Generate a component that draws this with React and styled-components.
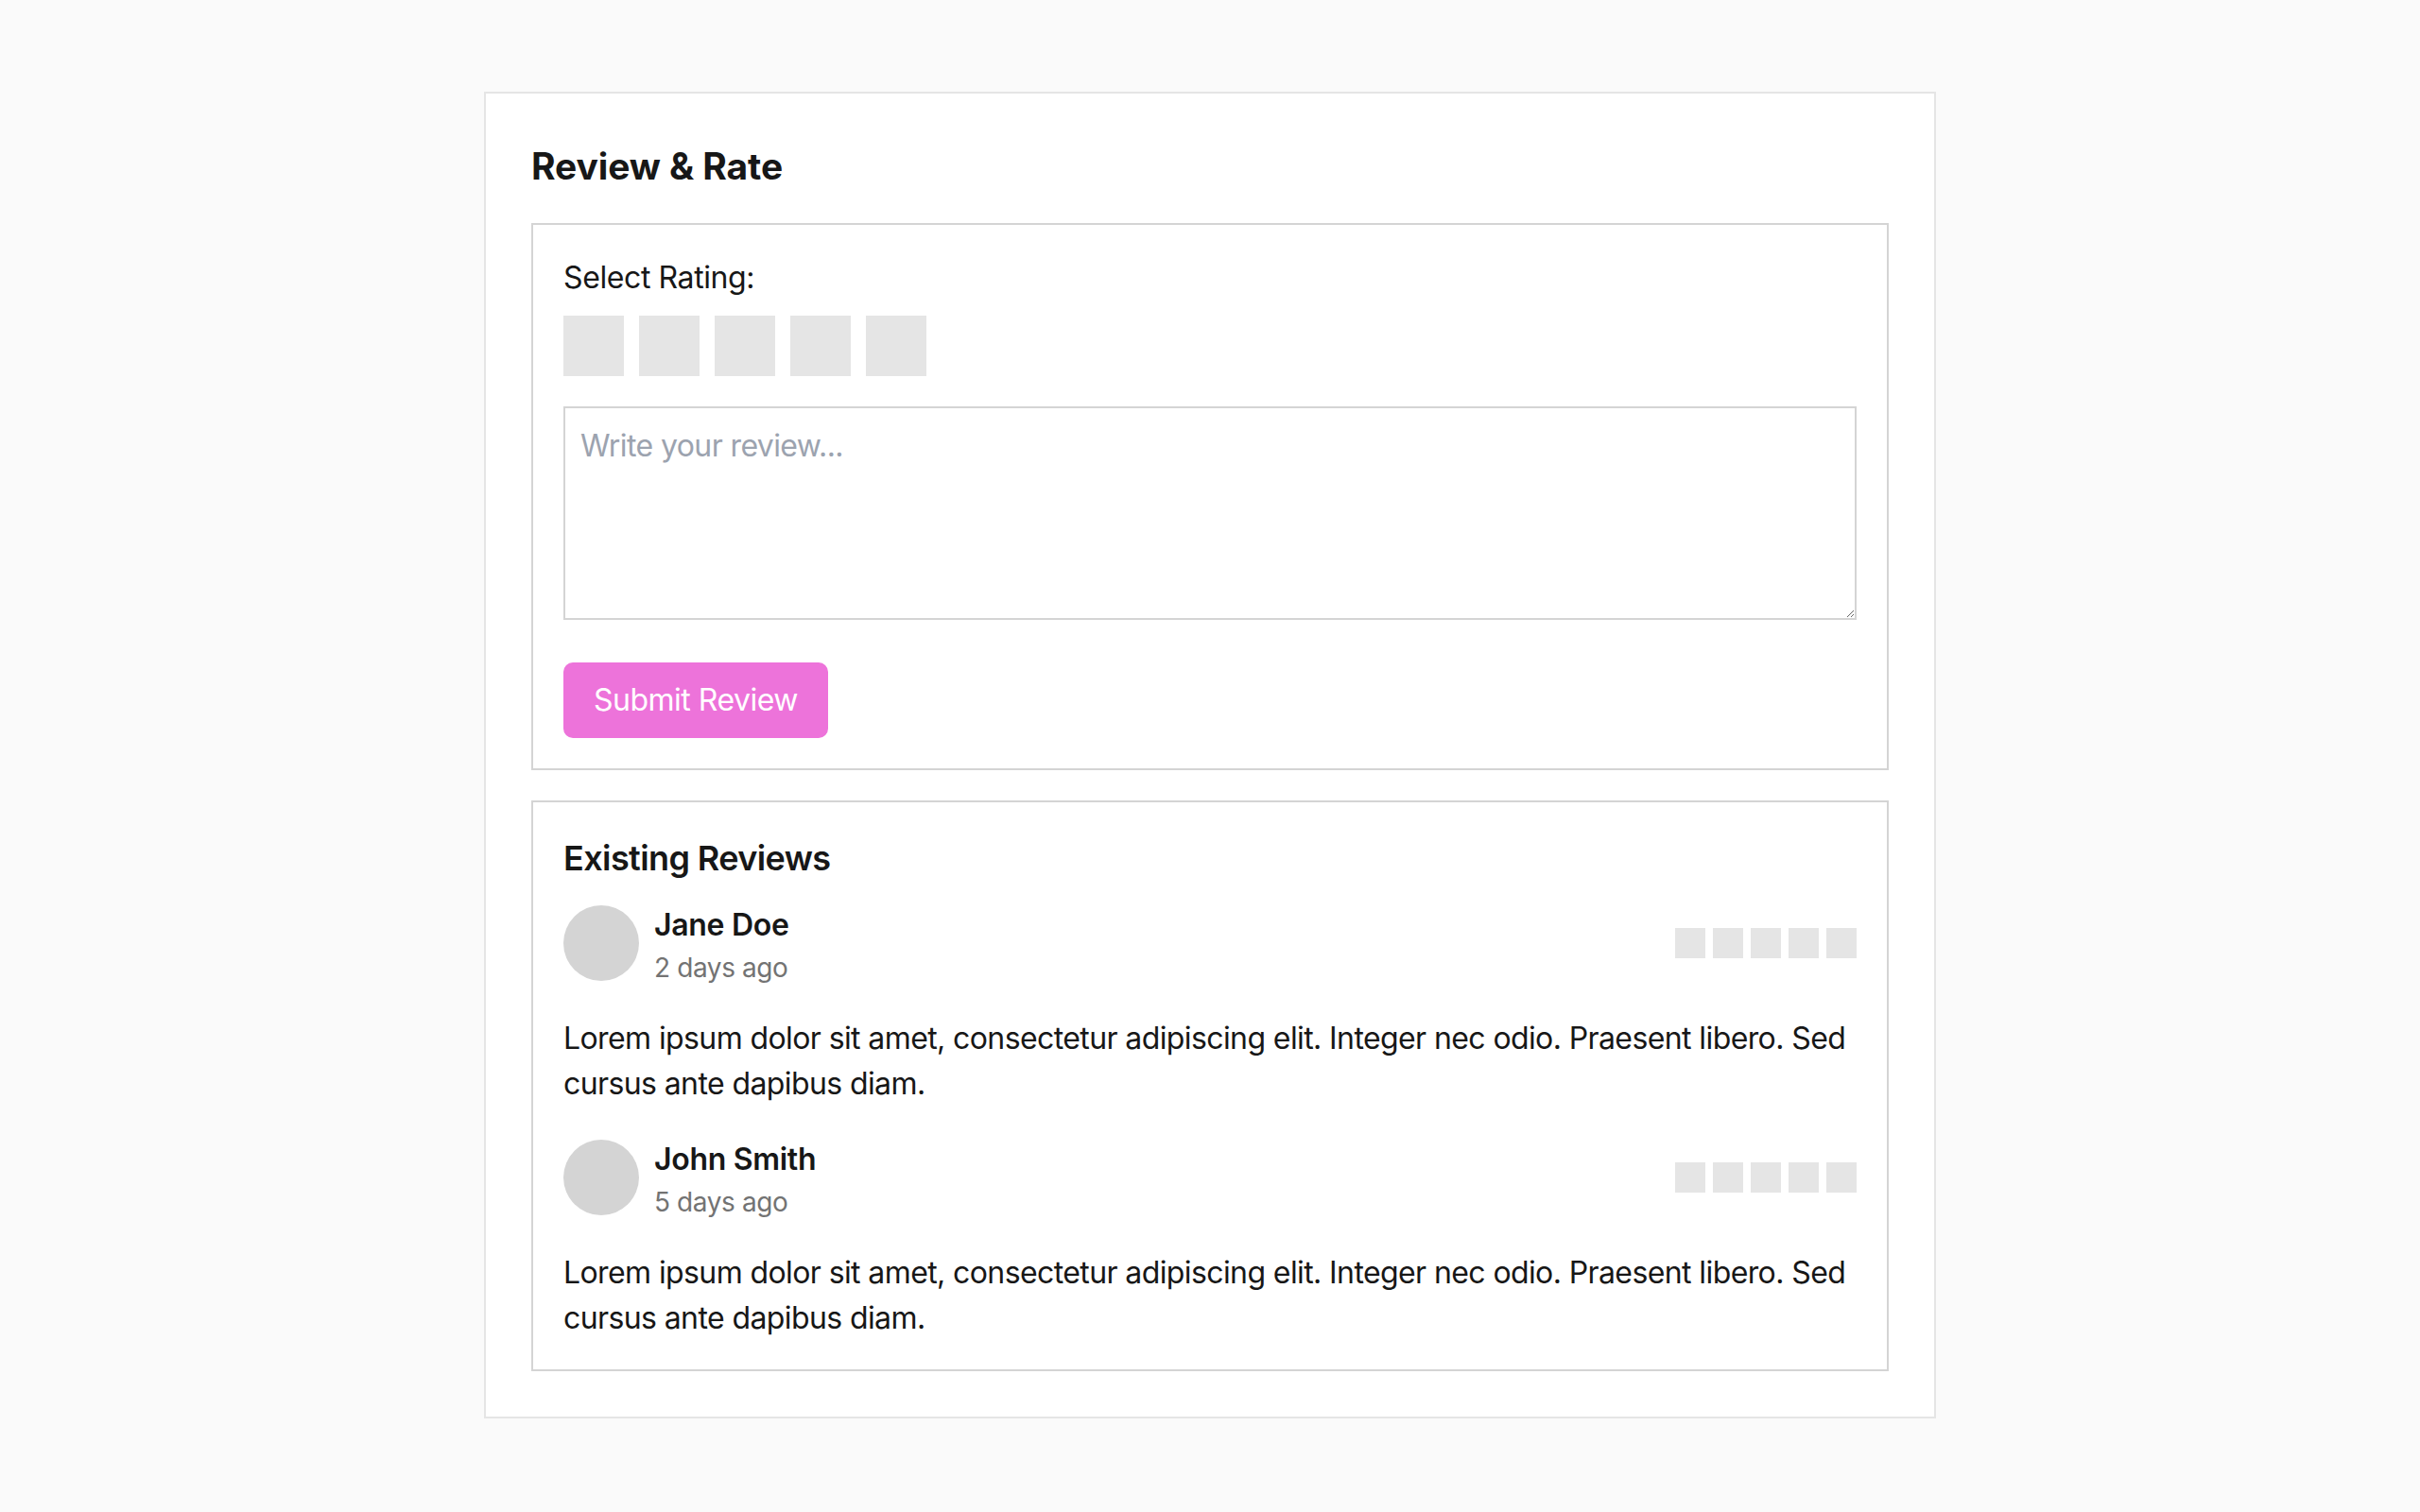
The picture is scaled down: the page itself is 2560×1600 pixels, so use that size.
import React from "react";
import styled, { createGlobalStyle } from "styled-components";

const GlobalStyle = createGlobalStyle`
  html, body {
    margin: 0;
    padding: 0;
    background: #fafafa;
  }
  body {
    font-family: Inter, "Noto Sans", "Liberation Sans", sans-serif;
    color: #171717;
  }
  * { box-sizing: border-box; }
`;

const Page = styled.div`
  min-height: 1600px;
  padding-top: 97px;
  display: flex;
  justify-content: center;
  align-items: flex-start;
`;

const Card = styled.section`
  width: 1536px;
  background: #ffffff;
  border: 2px solid #e5e5e5;
  padding: 50px 48px 48px;
  display: flex;
  flex-direction: column;
`;

const Title = styled.h2`
  margin: 0 0 33px;
  font-size: 39px;
  line-height: 54px;
  font-weight: 700;
  letter-spacing: -0.1px;
  color: #171717;
`;

const Panel = styled.div`
  border: 2px solid #d4d4d4;
  padding: ${(p) => (p.$list ? "32px 32px 30px" : "32px")};
  display: flex;
  flex-direction: column;
  align-items: flex-start;
  & + & {
    margin-top: 32px;
  }
`;

const Label = styled.div`
  font-size: 32px;
  line-height: 48px;
  letter-spacing: -0.4px;
  color: #171717;
`;

const Stars = styled.div`
  display: flex;
  gap: ${(p) => (p.$small ? 8 : 16)}px;
  margin-top: ${(p) => (p.$small ? 0 : 16)}px;
  flex-shrink: 0;
`;

const Star = styled.button`
  width: ${(p) => (p.$small ? 32 : 64)}px;
  height: ${(p) => (p.$small ? 32 : 64)}px;
  background: #e5e5e5;
  border: none;
  padding: 0;
  margin: 0;
  display: block;
  cursor: pointer;
`;

const TextArea = styled.textarea`
  display: block;
  width: 100%;
  height: 226px;
  margin-top: 32px;
  border: 2px solid #d4d4d4;
  border-radius: 0;
  padding: 16px;
  font-family: Inter, "Noto Sans", "Liberation Sans", sans-serif;
  font-size: 32px;
  line-height: 48px;
  letter-spacing: -0.6px;
  color: #171717;
  outline: none;
  &::placeholder {
    color: #9ca3af;
  }
`;

const SubmitButton = styled.button`
  margin-top: 45px;
  height: 80px;
  padding: 0 32px;
  border: none;
  border-radius: 10px;
  background: #ed73da;
  color: #ffffff;
  font-family: Inter, "Noto Sans", "Liberation Sans", sans-serif;
  font-size: 32px;
  line-height: 48px;
  letter-spacing: -0.5px;
  cursor: pointer;
`;

const SectionTitle = styled.h3`
  margin: 0 0 18px;
  font-size: 36px;
  line-height: 54px;
  font-weight: 600;
  letter-spacing: -0.6px;
  color: #171717;
`;

const ReviewList = styled.div`
  width: 100%;
  display: flex;
  flex-direction: column;
  gap: 30px;
`;

const Review = styled.article`
  display: flex;
  flex-direction: column;
  gap: 32px;
`;

const ReviewHeader = styled.div`
  display: flex;
  align-items: center;
  gap: 16px;
  height: 90px;
`;

const Avatar = styled.div`
  width: 80px;
  height: 80px;
  border-radius: 50%;
  background: #d4d4d4;
  flex-shrink: 0;
`;

const Meta = styled.div`
  flex: 1;
  display: flex;
  flex-direction: column;
  padding-top: 4px;
`;

const Name = styled.div`
  font-size: 32px;
  line-height: 48px;
  font-weight: 600;
  letter-spacing: -0.3px;
  color: #171717;
`;

const When = styled.div`
  font-size: 28px;
  line-height: 42px;
  letter-spacing: -0.4px;
  color: #737373;
`;

const Body = styled.p`
  margin: 0;
  font-size: 32px;
  line-height: 48px;
  letter-spacing: -0.6px;
  color: #171717;
`;

const lorem =
  "Lorem ipsum dolor sit amet, consectetur adipiscing elit. Integer nec odio. Praesent libero. Sed cursus ante dapibus diam.";

const reviews = [
  { name: "Jane Doe", when: "2 days ago", text: lorem },
  { name: "John Smith", when: "5 days ago", text: lorem },
];

export default function App() {
  return (
    <>
      <GlobalStyle />
      <Page>
        <Card>
          <Title>Review &amp; Rate</Title>
          <Panel>
            <Label>Select Rating:</Label>
            <Stars>
              {[1, 2, 3, 4, 5].map((n) => (
                <Star key={n} aria-label={`${n} star`} />
              ))}
            </Stars>
            <TextArea placeholder="Write your review..." />
            <SubmitButton>Submit Review</SubmitButton>
          </Panel>
          <Panel $list>
            <SectionTitle>Existing Reviews</SectionTitle>
            <ReviewList>
              {reviews.map((r) => (
                <Review key={r.name}>
                  <ReviewHeader>
                    <Avatar />
                    <Meta>
                      <Name>{r.name}</Name>
                      <When>{r.when}</When>
                    </Meta>
                    <Stars $small>
                      {[1, 2, 3, 4, 5].map((n) => (
                        <Star $small key={n} as="span" />
                      ))}
                    </Stars>
                  </ReviewHeader>
                  <Body>{r.text}</Body>
                </Review>
              ))}
            </ReviewList>
          </Panel>
        </Card>
      </Page>
    </>
  );
}
